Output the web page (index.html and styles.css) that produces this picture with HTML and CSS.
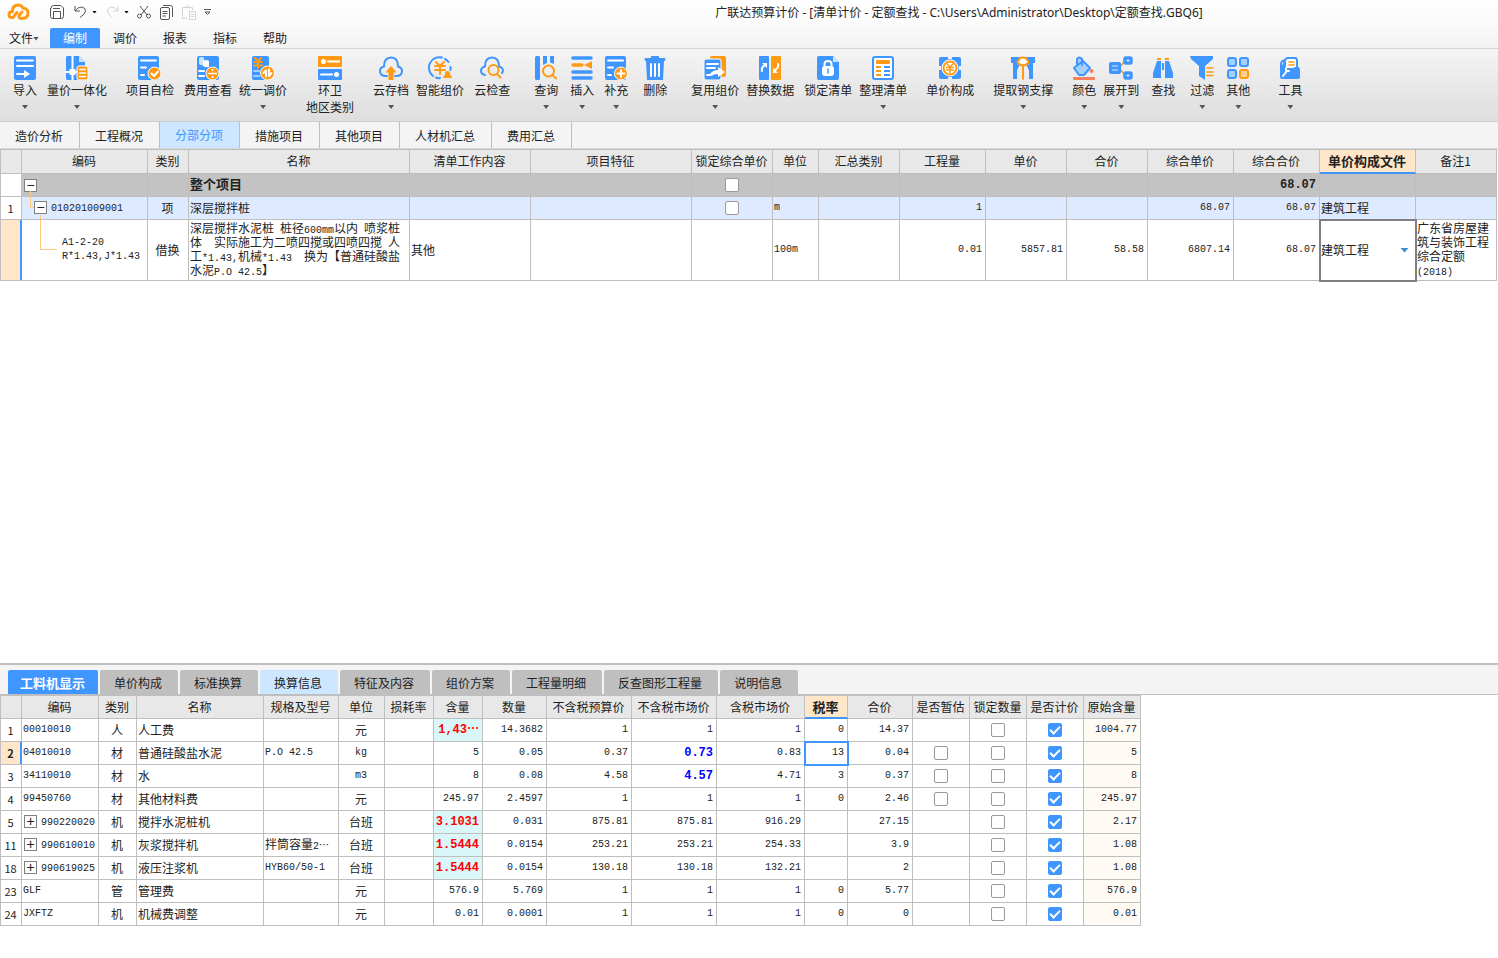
FILE: index.html
```html
<!DOCTYPE html>
<html lang="zh-CN">
<head>
<meta charset="utf-8">
<title>广联达预算计价</title>
<link rel="stylesheet" href="styles.css">
</head>
<body>
<div class="app">
<header class="titlebar">
  <div class="quick">
    <svg class="logo" width="24" height="18" viewBox="0 0 24 18" fill="none" stroke="#ff9a14" stroke-width="3" stroke-linecap="round" stroke-linejoin="round"><path d="M10 9.500L6 14.500Q2 15 2 11.500Q2 8.500 5.500 8.500Q5 2.500 11 2Q14.500 2 16 5Q21 5.500 21 10Q21 15.500 15 15.500Q12 15.500 12 13.500Q12 12 15 9"/></svg>
    <button class="qbtn save" aria-label="保存"><svg width="14" height="14" viewBox="0 0 14 14" class="line"><path d="M1 3.500Q1 .5 3.500 .5H11L13.500 3V11.500Q13.500 13.500 11.500 13.500H3Q.5 13.500 .5 11.500V3M3.500 13V6.500H10.500V13M3 3.500H10"/></svg></button>
    <button class="qbtn undo" aria-label="撤销"><svg width="13" height="14" viewBox="0 0 13 14" class="line"><path d="M1 1V6H6M1 6Q4 2 7.500 2Q11.500 2.500 11.500 6Q11.500 9 6 12.500"/></svg></button>
    <i class="drop"></i>
    <button class="qbtn redo off" aria-label="恢复"><svg width="13" height="14" viewBox="0 0 13 14" class="line"><path d="M12 1V6H7M12 6Q9 2 5.500 2Q1.500 2.500 1.500 6Q1.500 9 6 12.500"/></svg></button>
    <i class="drop"></i>
    <button class="qbtn cut" aria-label="剪切"><svg width="14" height="14" viewBox="0 0 14 14" class="line"><path d="M3 1L10 10M11 1L4 10"/><circle cx="2.500" cy="11" r="2"/><circle cx="11.500" cy="11" r="2"/></svg></button>
    <button class="qbtn copy" aria-label="复制"><svg width="13" height="15" viewBox="0 0 13 15" class="line"><rect x=".5" y="2.500" width="9" height="12" rx="1.500"/><path d="M3 .5H10.500Q12.500 .5 12.500 2.500V12M2.500 6.500H7.500M2.500 8.500H7.500M2.500 11H6"/></svg></button>
    <button class="qbtn paste off" aria-label="粘贴"><svg width="14" height="15" viewBox="0 0 14 15" class="line"><path d="M5 13.500H.5V2.500H10.500V5M3.500 2.500Q5 -1 7.500 2.500"/><rect x="7.500" y="6.500" width="6" height="8"/><path d="M9 9.500H12M9 11.500H12"/></svg></button>
    <svg width="7" height="8" viewBox="0 0 7 8" class="line"><path d="M0 1.500H7M1 4L3.500 6.500L6 4Z"/></svg>
  </div>
  <div class="caption">广联达预算计价 - [清单计价 - 定额查找 - C:\Users\Administrator\Desktop\定额查找.GBQ6]</div>
</header>
<nav class="menu">
  <button class="file">文件<i class="drop small"></i></button>
  <button class="on">编制</button><button>调价</button><button>报表</button><button>指标</button><button>帮助</button>
</nav>
<section class="ribbon">
  <button class="tool"><svg class="ico" viewBox="0 0 24 24"><rect class="b" x="1" width="22" height="24" rx="2"/><path class="ws" d="M4 4.500H20M4 10H20M4 18H13"/><path class="w" d="M11 14L17 18L11 22Z"/></svg><span>导入</span><i class="drop small"></i></button>
  <button class="tool m10"><svg class="ico" viewBox="0 0 24 24"><path class="b" d="M2 0H14L20 6V24H2Q1 24 1 22V2Q1 0 2 0Z"/><path class="lt" d="M14 0V6H20Z"/><path class="ws" d="M7.500 0V24M0 16H14"/><rect class="w" x="4.500" y="13" width="6" height="6"/><rect class="o halo" x="12" y="10" width="11" height="14" rx="2"/><path class="ws thin" d="M14.500 13.500H20.500M14.500 17H20.500M14.500 20.500H20.500"/></svg><span>量价一体化</span><i class="drop small"></i></button>
  <button class="tool m19"><svg class="ico" viewBox="0 0 24 24"><rect class="b" x="0" width="21" height="24" rx="2"/><path class="ws" d="M3 4.500H18M3 11.500H8M3 19H6"/><circle class="o halo" cx="16.500" cy="17.500" r="6.500"/><path class="ws" d="M13.500 17.500L16 20L20 15.500"/></svg><span>项目自检</span></button>
  <button class="tool m10"><svg class="ico" viewBox="0 0 24 24"><rect class="b" x="1" width="22" height="24" rx="2"/><path class="lt" d="M3 2Q6 0 8 2V9Q5 10 3 8Z"/><path class="w" d="M7 5Q10 3 13 5V11Q10 12 7 10Z"/><path class="ws" d="M3 15H8M3 20H8"/><circle class="o halo" cx="16.500" cy="17.500" r="6.500"/><path class="ws thin" d="M12.500 17.500H20.500"/><circle class="w" cx="16.500" cy="14" r="1"/><circle class="w" cx="16.500" cy="21" r="1"/></svg><span>费用查看</span></button>
  <button class="tool m7"><svg class="ico" viewBox="0 0 24 24"><rect class="b" x="1" width="17" height="24" rx="2"/><path class="os" d="M4 2L7 5.500L10 2M3 6H11M3 9.500H11M7 5V12"/><path class="ls" d="M3 15H8M3 20H8"/><circle class="o halo" cx="16.500" cy="17" r="7"/><path class="ws" d="M12.500 17L15 14.500V20.500M20.500 17L18 20V13.500"/></svg><span>统一调价</span><i class="drop small"></i></button>
  <button class="tool m19"><svg class="ico" viewBox="0 0 24 24"><rect class="o" width="24" height="11" rx="1"/><rect class="b" y="13" width="24" height="11" rx="1"/><circle class="w" cx="5.500" cy="5.500" r="2.500"/><path class="ws" d="M10 5.500H21M3 18.500H14"/><circle class="w" cx="18.500" cy="18.500" r="2.500"/></svg><span>环卫</span><span class="second">地区类别</span></button>
  <button class="tool m19"><svg class="ico" viewBox="0 0 24 24"><path class="bs" d="M8 20H6Q1 19.500 1 15Q1 11.500 5 10.500Q5 1.500 12 1.500Q19 1.500 19 10.500Q23 11.500 23 15Q23 19.500 18 20H16"/><path class="o" d="M12 10L17.500 16.500H14.500V24H9.500V16.500H6.500Z"/></svg><span>云存档</span><i class="drop small"></i></button>
  <button class="tool m7"><svg class="ico" viewBox="0 0 24 24"><path class="bs" d="M5 20A10.500 10.500 0 0 1 14 1.500M17 3A10.500 10.500 0 0 1 20.500 6M22.500 11V14M8 21.500Q10 22.500 12 22"/><path class="os" d="M8 6L12 10L16 6M7 10H17M7 14H17M12 9V18"/><circle class="o" cx="19.500" cy="17.500" r="2.500"/><path class="o" d="M15 22Q16 18 19.500 18Q23 18 24 22Z"/></svg><span>智能组价</span></button>
  <button class="tool m10"><svg class="ico" viewBox="0 0 24 24"><path class="bs" d="M5 19Q1 18 1 15Q1 11.500 5 10.500Q5 1.500 12 1.500Q19 1.500 19 10.500Q23 11.500 23 15L22 17"/><circle class="os" cx="13.500" cy="14" r="5"/><path class="os" d="M17 18L20.500 21.500"/></svg><span>云检查</span></button>
  <button class="tool m24"><svg class="ico" viewBox="0 0 24 24"><rect class="b" x="1" width="5" height="24" rx="1.500"/><path class="b" d="M9 0H13V7L9 9ZM16 0H20V8L16 6.500Z"/><circle class="os" cx="14.500" cy="15" r="5.500"/><path class="os" d="M18.500 19L22 22.500"/></svg><span>查询</span><i class="drop small"></i></button>
  <button class="tool m12"><svg class="ico" viewBox="0 0 24 24"><path class="bs thick" d="M3 2H21M3 16H21M3 22H21"/><path class="os thick" d="M3 9H12"/><path class="o" d="M14 9L22 5V13Z"/></svg><span>插入</span><i class="drop small"></i></button>
  <button class="tool m10"><svg class="ico" viewBox="0 0 24 24"><rect class="b" x="1" width="21" height="24" rx="2"/><path class="ws" d="M4 4.500H19M4 11.500H9M4 19H7"/><circle class="o halo" cx="17" cy="17.500" r="6.500"/><path class="ws" d="M13.500 17.500H20.500M17 14V21"/></svg><span>补充</span><i class="drop small"></i></button>
  <button class="tool m15"><svg class="ico" viewBox="0 0 24 24"><path class="b" d="M8 0H16V2H22Q23 4 22 5H21L20 24H4L3 5H2Q1 4 2 2H8Z"/><path class="ws" d="M8 8V20M12 8V20M16 8V20"/></svg><span>删除</span></button>
  <button class="tool m24"><svg class="ico" viewBox="0 0 24 24"><rect class="o" x="7" width="16" height="21" rx="2"/><rect class="b halo" x="1" y="3" width="17" height="21" rx="2"/><path class="ws" d="M4 8H15M4 12H12M4 19H7"/><path class="w" d="M7 18Q10 14 15 14V11L22 16L15 21V18Q11 18 8 20Z"/></svg><span>复用组价</span><i class="drop small"></i></button>
  <button class="tool m7"><svg class="ico" viewBox="0 0 24 24"><rect class="b" x="1" width="10" height="24" rx="1"/><rect class="o" x="13" width="10" height="24" rx="1"/><path class="ws" d="M4 15Q3 11 7 9M20 8Q21 12 17 14"/><path class="w" d="M4 7H9V12ZM15 12V17H20Z"/></svg><span>替换数据</span></button>
  <button class="tool m10"><svg class="ico" viewBox="0 0 24 24"><path class="b" d="M3 0H17L23 6V22Q23 24 21 24H3Q1 24 1 22V2Q1 0 3 0Z"/><path class="lt" d="M17 0V6H23Z"/><path class="ws" d="M8.500 11V8Q8.500 5 12 5Q15.500 5 15.500 8V11"/><rect class="w" x="6" y="10" width="12" height="10" rx="3"/><path class="bs thin" d="M12 13V17"/></svg><span>锁定清单</span></button>
  <button class="tool m7"><svg class="ico" viewBox="0 0 24 24"><rect class="bs onwhite" x="2" y="1" width="20" height="22" rx="2"/><rect class="o" x="5" y="4" width="14" height="4" rx="1"/><path class="os butt" d="M5 11H10M5 15H10M5 19H10"/><path class="bs butt" d="M13 11H19M13 15H19M13 19H19"/></svg><span>整理清单</span><i class="drop small"></i></button>
  <button class="tool m19"><svg class="ico" viewBox="0 0 24 24"><path class="b" d="M3 1H10V3H14V1H21Q23 1 23 3V10H21V14H23V21Q23 23 21 23H14V21H10V23H3Q1 23 1 21V14H3V10H1V3Q1 1 3 1Z"/><circle class="w" cx="12" cy="12" r="8.500"/><circle class="os" cx="12" cy="12" r="6.500"/><path class="os thin" d="M9 8L12 11L15 8M8.500 11.500H15.500M8.500 14H15.500M12 11V17"/></svg><span>单价构成</span></button>
  <button class="tool m19"><svg class="ico" viewBox="0 0 24 24"><path class="b" d="M0 1H24V7H22V23H18V9L14 5H10L6 9V23H2V7H0Z"/><path class="bs" d="M9 6L5 14M15 6L19 14"/><path class="os onwhite" d="M8 8Q5 6 8 4Q8 1.500 12 1.500Q16 1.500 16 4Q19 6 16 8L13 9.500H11ZM12 9V23"/></svg><span>提取钢支撑</span><i class="drop small"></i></button>
  <button class="tool m19"><svg class="ico" viewBox="0 0 24 24"><path class="bs onblue" d="M3 11L11 5L18 12L12 19H7L2 12ZM5 9V3Q7 0 10 3V9"/><circle fill="#f87f5e" cx="19.500" cy="15" r="2"/><rect fill="#f87f5e" x="1" y="21" width="22" height="3" rx="1"/></svg><span>颜色</span><i class="drop small"></i></button>
  <button class="tool m7"><svg class="ico" viewBox="0 0 24 24"><path class="os thin" d="M10 12L16 5M10 12L16 19"/><rect class="b" x="0" y="6" width="12" height="12" rx="2"/><path class="ls thin" d="M3.500 10H8.500M3.500 14H8.500"/><rect class="bs thick onwhite" x="16" y="2" width="6" height="5" rx="1"/><rect class="bs thick onwhite" x="16" y="17" width="6" height="5" rx="1"/></svg><span>展开到</span><i class="drop small"></i></button>
  <button class="tool m12"><svg class="ico" viewBox="0 0 24 24"><path class="o" d="M6 2H10V4H6ZM14 2H18V4H14Z"/><path class="b" d="M6 5H10V22H2V17ZM14 5H18L22 17V22H14ZM11 7H13V14H11Z"/></svg><span>查找</span></button>
  <button class="tool m15"><svg class="ico" viewBox="0 0 24 24"><path class="b" d="M0 0H23V3L15 10V24L9 20V10L1 3Z"/><path class="os thin" d="M16.500 12H23M16.500 16H23M16.500 19.500H23"/></svg><span>过滤</span><i class="drop small"></i></button>
  <button class="tool m12"><svg class="ico" viewBox="0 0 24 24"><g class="bs onblue"><rect x="2" y="2" width="8" height="8" rx="2"/><rect x="14" y="2" width="8" height="8" rx="2"/><rect x="2" y="14" width="8" height="8" rx="2"/></g><rect class="os onorange" x="14" y="14" width="8" height="8" rx="2"/></svg><span>其他</span><i class="drop small"></i></button>
  <button class="tool m28"><svg class="ico" viewBox="0 0 24 24"><path class="bs onwhite" d="M3 20V8Q3 5 7 4L9 2H17Q19 2 19 5V14H21V21H4Z"/><path class="b" d="M2 10H8V12H15L17 11H21Q22 12 22 21Q22 23 20 23H4Q2 23 2 21ZM6 5H8V12H3Z"/><path class="os thin" d="M11 6H16M11 9H16"/><path class="ws" d="M5 20L9 15M8 12V15L11 15"/></svg><span>工具</span><i class="drop small"></i></button>
</section>
<nav class="views">
  <button>造价分析</button><button>工程概况</button><button class="on">分部分项</button><button>措施项目</button><button>其他项目</button><button>人材机汇总</button><button>费用汇总</button>
</nav>
<main class="upper">
<table class="grid bill">
<colgroup><col class="c21"><col class="c126"><col class="c41"><col class="c221"><col class="c121"><col class="c161"><col class="c81"><col class="c46"><col class="c81"><col class="c86"><col class="c81"><col class="c81"><col class="c86"><col class="c86"><col class="c96"><col></colgroup>
<thead><tr><th></th><th>编码</th><th>类别</th><th>名称</th><th>清单工作内容</th><th>项目特征</th><th>锁定综合单价</th><th>单位</th><th>汇总类别</th><th>工程量</th><th>单价</th><th>合价</th><th>综合单价</th><th>综合合价</th><th class="current">单价构成文件</th><th>备注1</th></tr></thead>
<tbody>
<tr class="total"><td class="idx"></td><td class="node n0"><button class="toggle" aria-label="折叠">−</button></td><td></td><td class="title">整个项目</td><td></td><td></td><td class="mid"><input type="checkbox" aria-label="锁定综合单价"></td><td></td><td></td><td></td><td></td><td></td><td></td><td class="num strong">68.07</td><td></td><td></td></tr>
<tr class="item"><td class="idx">1</td><td class="node n1"><button class="toggle" aria-label="折叠">−</button><span class="n">010201009001</span></td><td class="mid">项</td><td>深层搅拌桩</td><td></td><td></td><td class="mid"><input type="checkbox" aria-label="锁定综合单价"></td><td class="n">m</td><td></td><td class="num">1</td><td></td><td></td><td class="num">68.07</td><td class="num">68.07</td><td>建筑工程</td><td></td></tr>
<tr class="quota"><td class="idx current"></td><td class="node n2 n">A1-2-20<br>R*1.43,J*1.43</td><td class="mid">借换</td><td class="multi">深层搅拌水泥桩<span class="n"> </span>桩径<span class="n">600mm</span>以内<span class="n"> </span>喷浆桩<br>体<span class="n">  </span>实际施工为二喷四搅或四喷四搅<span class="n"> </span>人<br>工<span class="n">*1.43,</span>机械<span class="n">*1.43  </span>换为【普通硅酸盐<br>水泥<span class="n">P.O 42.5</span>】</td><td>其他</td><td></td><td></td><td class="n">100m</td><td></td><td class="num">0.01</td><td class="num">5857.81</td><td class="num">58.58</td><td class="num">6807.14</td><td class="num">68.07</td><td class="pick"><div><select aria-label="单价构成文件"><option>建筑工程</option></select><i></i></div></td><td class="multi">广东省房屋建<br>筑与装饰工程<br>综合定额<br><span class="n">(2018)</span></td></tr>
</tbody></table>
</main>
<section class="lower">
<nav class="tabs">
  <button class="on">工料机显示</button><button>单价构成</button><button>标准换算</button><button class="hint">换算信息</button><button>特征及内容</button><button>组价方案</button><button>工程量明细</button><button>反查图形工程量</button><button>说明信息</button>
</nav>
<table class="grid res">
<colgroup><col class="c21"><col class="c77"><col class="c38"><col class="c127"><col class="c75"><col class="c46"><col class="c49"><col class="c49"><col class="c64"><col class="c85"><col class="c85"><col class="c88"><col class="c43"><col class="c65"><col class="c57"><col class="c57"><col class="c57"><col class="c57"></colgroup>
<thead><tr><th></th><th>编码</th><th>类别</th><th>名称</th><th>规格及型号</th><th>单位</th><th>损耗率</th><th>含量</th><th>数量</th><th>不含税预算价</th><th>不含税市场价</th><th>含税市场价</th><th class="current">税率</th><th>合价</th><th>是否暂估</th><th>锁定数量</th><th>是否计价</th><th>原始含量</th></tr></thead>
<tbody>
<tr><td class="idx">1</td><td class="n">00010010</td><td class="mid">人</td><td>人工费</td><td></td><td class="mid">元</td><td></td><td class="num changed">1,43⋯</td><td class="num">14.3682</td><td class="num">1</td><td class="num">1</td><td class="num">1</td><td class="num">0</td><td class="num">14.37</td><td></td><td class="mid"><input type="checkbox" aria-label="锁定数量"></td><td class="mid"><input type="checkbox" checked aria-label="是否计价"></td><td class="num orig">1004.77</td></tr>
<tr><td class="idx current">2</td><td class="n">04010010</td><td class="mid">材</td><td>普通硅酸盐水泥</td><td class="n">P.O 42.5</td><td class="mid n">kg</td><td></td><td class="num">5</td><td class="num">0.05</td><td class="num">0.37</td><td class="num edited">0.73</td><td class="num">0.83</td><td class="num editing"><input type="text" value="13" aria-label="税率"></td><td class="num">0.04</td><td class="mid"><input type="checkbox" aria-label="是否暂估"></td><td class="mid"><input type="checkbox" aria-label="锁定数量"></td><td class="mid"><input type="checkbox" checked aria-label="是否计价"></td><td class="num orig">5</td></tr>
<tr><td class="idx">3</td><td class="n">34110010</td><td class="mid">材</td><td>水</td><td></td><td class="mid n">m3</td><td></td><td class="num">8</td><td class="num">0.08</td><td class="num">4.58</td><td class="num edited">4.57</td><td class="num">4.71</td><td class="num">3</td><td class="num">0.37</td><td class="mid"><input type="checkbox" aria-label="是否暂估"></td><td class="mid"><input type="checkbox" aria-label="锁定数量"></td><td class="mid"><input type="checkbox" checked aria-label="是否计价"></td><td class="num orig">8</td></tr>
<tr><td class="idx">4</td><td class="n">99450760</td><td class="mid">材</td><td>其他材料费</td><td></td><td class="mid">元</td><td></td><td class="num">245.97</td><td class="num">2.4597</td><td class="num">1</td><td class="num">1</td><td class="num">1</td><td class="num">0</td><td class="num">2.46</td><td class="mid"><input type="checkbox" aria-label="是否暂估"></td><td class="mid"><input type="checkbox" aria-label="锁定数量"></td><td class="mid"><input type="checkbox" checked aria-label="是否计价"></td><td class="num orig">245.97</td></tr>
<tr><td class="idx">5</td><td class="node"><button class="toggle" aria-label="展开">+</button><span class="n">990220020</span></td><td class="mid">机</td><td>搅拌水泥桩机</td><td></td><td class="mid">台班</td><td></td><td class="num changed">3.1031</td><td class="num">0.031</td><td class="num">875.81</td><td class="num">875.81</td><td class="num">916.29</td><td></td><td class="num">27.15</td><td></td><td class="mid"><input type="checkbox" aria-label="锁定数量"></td><td class="mid"><input type="checkbox" checked aria-label="是否计价"></td><td class="num orig">2.17</td></tr>
<tr><td class="idx">11</td><td class="node"><button class="toggle" aria-label="展开">+</button><span class="n">990610010</span></td><td class="mid">机</td><td>灰浆搅拌机</td><td>拌筒容量<span class="n">2⋯</span></td><td class="mid">台班</td><td></td><td class="num changed">1.5444</td><td class="num">0.0154</td><td class="num">253.21</td><td class="num">253.21</td><td class="num">254.33</td><td></td><td class="num">3.9</td><td></td><td class="mid"><input type="checkbox" aria-label="锁定数量"></td><td class="mid"><input type="checkbox" checked aria-label="是否计价"></td><td class="num orig">1.08</td></tr>
<tr><td class="idx">18</td><td class="node"><button class="toggle" aria-label="展开">+</button><span class="n">990619025</span></td><td class="mid">机</td><td>液压注浆机</td><td class="n">HYB60/50-1</td><td class="mid">台班</td><td></td><td class="num changed">1.5444</td><td class="num">0.0154</td><td class="num">130.18</td><td class="num">130.18</td><td class="num">132.21</td><td></td><td class="num">2</td><td></td><td class="mid"><input type="checkbox" aria-label="锁定数量"></td><td class="mid"><input type="checkbox" checked aria-label="是否计价"></td><td class="num orig">1.08</td></tr>
<tr><td class="idx">23</td><td class="n">GLF</td><td class="mid">管</td><td>管理费</td><td></td><td class="mid">元</td><td></td><td class="num">576.9</td><td class="num">5.769</td><td class="num">1</td><td class="num">1</td><td class="num">1</td><td class="num">0</td><td class="num">5.77</td><td></td><td class="mid"><input type="checkbox" aria-label="锁定数量"></td><td class="mid"><input type="checkbox" checked aria-label="是否计价"></td><td class="num orig">576.9</td></tr>
<tr><td class="idx">24</td><td class="n">JXFTZ</td><td class="mid">机</td><td>机械费调整</td><td></td><td class="mid">元</td><td></td><td class="num">0.01</td><td class="num">0.0001</td><td class="num">1</td><td class="num">1</td><td class="num">1</td><td class="num">0</td><td class="num">0</td><td></td><td class="mid"><input type="checkbox" aria-label="锁定数量"></td><td class="mid"><input type="checkbox" checked aria-label="是否计价"></td><td class="num orig">0.01</td></tr>
</tbody></table>
</section>
</div>
</body>
</html>
```
FILE: styles.css
```css
*, *::before, *::after { box-sizing: border-box; }
body { margin: 0; background: #fff; color: #222; font: 12px/16px "Noto Sans", "Noto Sans CJK SC", sans-serif; }
button { border: 0; padding: 0; margin: 0; background: none; color: inherit; font: inherit; white-space: nowrap; }
.app { display: flex; flex-direction: column; min-height: 100vh; }

/* title bar and menu */
.titlebar { display: flex; align-items: center; height: 26px; background: linear-gradient(#fff, #fafafa); }
.quick { display: flex; align-items: center; width: 420px; padding: 0 0 2px 7px; }
.quick svg { display: block; flex: none; }
.line { fill: none; stroke: #555; stroke-width: 1; }
.logo { margin-right: 19px; }
.off .line { stroke: #d4d4d4; }
.save { margin-right: 10px; }
.undo { margin-right: 5px; }
.redo { margin: 0 5px 0 9px; }
.cut { margin: 0 9px 0 8px; }
.copy { margin-right: 9px; }
.paste { margin-right: 8px; }
.drop { display: block; flex: none; width: 5px; height: 3px; background: #000; clip-path: polygon(0 0, 100% 0, 50% 100%); }
.drop.small { width: 6px; height: 4px; background: #555; }
.caption { flex: 1; text-align: center; line-height: 26px; white-space: nowrap; }
.menu { display: flex; align-items: flex-end; height: 23px; border-bottom: 1px solid #d4d4d4; background: linear-gradient(#fafafa, #f2f2f2); }
.menu button { width: 50px; height: 20px; padding-top: 1px; line-height: 19px; }
.menu .file { display: flex; align-items: center; padding-left: 9px; }
.menu .on { background: #4096ff; color: #fff; border-radius: 2px 2px 0 0; }

/* ribbon */
.ribbon { display: flex; align-items: flex-start; height: 73px; padding: 7px 0 0 13px; border-bottom: 1px solid #ccc; background: linear-gradient(#f4f4f4, #dedede); }
.tool { display: flex; flex-direction: column; align-items: center; flex: none; }
.tool span { margin-top: 3px; }
.tool .second { margin-top: 1px; }
.tool .drop { margin-top: 6px; }
.ico { display: block; width: 24px; height: 24px; margin: 0 -1px; }
.m7 { margin-left: 7px; }
.m10 { margin-left: 10px; }
.m12 { margin-left: 12px; }
.m15 { margin-left: 15px; }
.m19 { margin-left: 19px; }
.m24 { margin-left: 24px; }
.m28 { margin-left: 28px; }
.b { fill: #4096ff; }
.o { fill: #ff9a14; }
.w { fill: #fff; }
.lt { fill: #cde5ff; }
.bs, .os, .ws, .ls { fill: none; stroke-width: 2; stroke-linecap: round; stroke-linejoin: round; }
.bs { stroke: #4096ff; }
.os { stroke: #ff9a14; }
.ws { stroke: #fff; }
.ls { stroke: #a5cfff; }
.thin { stroke-width: 1.500; }
.thick { stroke-width: 3.500; }
.butt { stroke-linecap: butt; }
.halo { stroke: #fff; stroke-width: 1; }
.onwhite { fill: #fff; }
.onblue { fill: #a5cfff; }
.onorange { fill: #ffcf91; }

/* view tabs */
.views { display: flex; height: 27px; background: #f4f4f4; border-bottom: 1px solid #d8d8d8; }
.views button { padding: 3px 16px 0 15px; border-right: 1px solid #bfbfbf; }
.views .on { background: #cce7ff; color: #4096ff; padding-top: 2px; }

/* grids */
.grid { border-collapse: collapse; table-layout: fixed; font-family: "Noto Sans CJK SC", sans-serif; }
.grid th, .grid td { height: 23px; padding: 0 3px 0 1px; border: 1px solid #bfbfbf; line-height: 14px; overflow: hidden; white-space: pre; text-align: left; font-weight: normal; }
.grid th { background: #e8e8e8; text-align: center; padding: 0 1px 0 0; }
.grid .current { background: #ffe6c8; font-weight: bold; }
.grid th.current { border-bottom-color: #4096ff; box-shadow: inset 0 -1px #4096ff; font-size: 13px; }
.grid .idx { text-align: center; padding: 0 1px 0 0; font-size: 11px; }
.grid td.idx { background: #fff; }
.grid td.idx.current { background: #ffe6c8; border-right-color: #4096ff; box-shadow: inset -1px 0 #4096ff; }
.grid .mid { text-align: center; padding: 0 1px 0 0; }
.grid .n, .grid .num { font-family: "Liberation Mono", "Noto Sans CJK SC", monospace; font-size: 10px; }
.grid .num { text-align: right; }
.grid .multi { font-family: "Liberation Sans", "Noto Sans CJK SC", sans-serif; }
.grid .multi .n { line-height: 10px; }
.grid .strong { font-weight: bold; font-size: 12px; }
.grid .title { font-weight: bold; font-size: 13px; padding-bottom: 2px; }
.grid .changed { background: #d9f7f9; color: #f00; font-weight: bold; font-size: 12px; }
.grid .edited { color: #00f; font-weight: bold; font-size: 12px; }
.grid td.orig { background: #fffaf4; }
.bill { width: calc(100% - 1px); }
.bill thead th { height: 24px; padding-bottom: 2px; }
.total td { background: #c3c3c3; }
.item td { background: #deeaff; }
.quota td { height: 61px; }
.res { width: 1141px; }
.c21 { width: 21px; } .c38 { width: 38px; } .c41 { width: 41px; } .c43 { width: 43px; } .c46 { width: 46px; }
.c49 { width: 49px; } .c57 { width: 57px; } .c64 { width: 64px; } .c65 { width: 65px; } .c75 { width: 75px; }
.c77 { width: 77px; } .c81 { width: 81px; } .c85 { width: 85px; } .c86 { width: 86px; } .c88 { width: 88px; }
.c96 { width: 96px; } .c121 { width: 121px; } .c126 { width: 126px; } .c127 { width: 127px; } .c161 { width: 161px; } .c221 { width: 221px; }

/* tree column */
.grid .node { position: relative; padding: 0 0 2px 2px; }
.toggle { width: 13px; height: 13px; margin-right: 4px; border: 1px solid #808080; background: #fff; font: 14px/11px "Liberation Sans", sans-serif; vertical-align: middle; }
.grid .n1 { padding-left: 12px; }
.grid .n2 { padding-left: 40px; padding-bottom: 0; }
.n0::after, .n1::before, .n1::after, .n2::before { content: ""; position: absolute; border: 0 solid #ffca80; border-left-width: 1px; }
.n0::after { left: 8px; top: 17px; bottom: 0; }
.n1::before { left: 8px; top: 0; width: 4px; height: 11px; border-bottom-width: 1px; }
.n1::after { left: 18px; top: 18px; bottom: 0; }
.n2::before { left: 18px; top: 0; width: 17px; height: 30px; border-bottom-width: 1px; }

/* cell editors */
input[type="checkbox"] { appearance: none; display: block; width: 14px; height: 14px; margin: 0 auto; border: 1px solid #999; border-radius: 2px; background: #fff; }
input[type="checkbox"]:checked { border-color: #4096ff; background: #4096ff; }
input[type="checkbox"]:checked::after { content: ""; display: block; width: 10px; height: 6px; margin: 2px 1px; border: solid #fff; border-width: 0 0 2px 2px; rotate: -45deg; }
.grid .pick, .grid .editing { padding: 0; outline: 2px solid #808080; outline-offset: -1px; }
.grid .editing { outline-color: #4096ff; }
.pick div { display: flex; align-items: center; padding: 0 6px 0 1px; }
.pick select { appearance: none; flex: 1; min-width: 0; border: 0; padding: 0; background: none; color: inherit; font: inherit; }
.pick i { width: 9px; height: 5px; background: #3d8fd0; clip-path: polygon(0 0, 100% 0, 50% 100%); }
.editing input { display: block; width: 100%; border: 0; padding: 0 3px 0 1px; background: none; color: inherit; font: inherit; text-align: right; }

/* panes */
.upper { flex: 1; }
.lower { border-top: 2px solid #bfbfbf; padding-bottom: 32px; }
.tabs { display: flex; gap: 2px; height: 30px; padding: 5px 8px 0; background: #f4f4f4; border-bottom: 1px solid #bfbfbf; font-family: "Noto Sans CJK SC", sans-serif; }
.tabs button { padding: 2px 16px 0 14px; background: #bfbfbf; border-radius: 2px 2px 0 0; }
.tabs .on { padding: 2px 13px 0 12px; background: #4096ff; color: #fff; font-weight: bold; font-size: 13px; }
.tabs .hint { background: #cce7ff; }
```
